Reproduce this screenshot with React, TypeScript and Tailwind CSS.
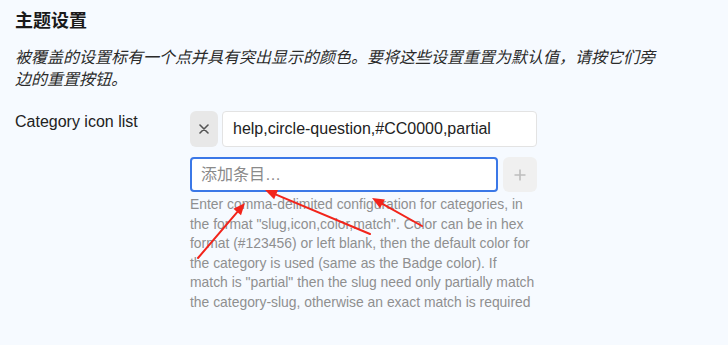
import React from 'react';

const arrows = [
    { x1: 370, y1: 234, x2: 265, y2: 190 },
    { x1: 422, y1: 226, x2: 372, y2: 198 },
    { x1: 198, y1: 258, x2: 245, y2: 203 },
];

const Arrow = ({ x1, y1, x2, y2 }: { x1: number; y1: number; x2: number; y2: number }) => {
    const a = Math.atan2(y2 - y1, x2 - x1);
    const len = 12;
    const w = 5;
    const bx = x2 - len * Math.cos(a);
    const by = y2 - len * Math.sin(a);
    const px = -Math.sin(a) * w;
    const py = Math.cos(a) * w;
    return (
        <g>
            <line x1={x1} y1={y1} x2={bx} y2={by} stroke="#f2241b" strokeWidth={2} strokeLinecap="round" />
            <polygon points={`${x2},${y2} ${bx + px},${by + py} ${bx - px},${by - py}`} fill="#f2241b" />
        </g>
    );
};

export default function App() {
    return (
        <div
            className="relative w-[728px] h-[345px] overflow-hidden bg-[#f6faff] px-[15px] text-[#222]"
            style={{ fontFamily: '"Liberation Sans", Arial, "Noto Sans CJK SC", sans-serif' }}
        >
            <h2 className="pt-[9px] text-[18px] font-bold leading-[24px] text-[#1a1a1a]">主题设置</h2>
            <p className="mt-[14px] w-[645px] text-[16px] italic leading-[22px] text-[#2a2a2a]">
                被覆盖的设置标有一个点并具有突出显示的颜色。要将这些设置重置为默认值，请按它们旁边的重置按钮。
            </p>

            <div className="mt-[20px] flex">
                <div className="w-[175px] shrink-0 pt-[2px] text-[16px] leading-[18px] text-[#222]">Category icon list</div>

                <div className="flex w-[347px] flex-col">
                    <div className="flex h-[36px] gap-[4px]">
                        <button className="flex w-[28px] shrink-0 items-center justify-center rounded-[6px] bg-[#e8e8e8] text-[#555]">
                            <svg width="10" height="10" viewBox="0 0 10 10">
                                <path d="M1 1L9 9M9 1L1 9" stroke="#555" strokeWidth="1.6" strokeLinecap="round" />
                            </svg>
                        </button>
                        <div className="flex flex-1 items-center rounded-[4px] border border-[#e3e3e3] bg-white px-[10px] text-[16px] text-[#222]">
                            help,circle-question,#CC0000,partial
                        </div>
                    </div>

                    <div className="mt-[10px] flex h-[35px] gap-[5px]">
                        <div className="flex flex-1 items-center rounded-[4px] border-2 border-[#3b78e7] bg-white px-[9px] text-[16px] text-[#8a8a8a]">
                            添加条目…
                        </div>
                        <button className="flex w-[34px] shrink-0 items-center justify-center rounded-[6px] bg-[#f0f0f0]">
                            <svg width="12" height="12" viewBox="0 0 12 12">
                                <path d="M6 0.5V11.5M0.5 6H11.5" stroke="#bdbdbd" strokeWidth="1.6" />
                            </svg>
                        </button>
                    </div>

                    <p className="mt-[3px] w-[345px] text-[13.9px] leading-[19.5px] text-[#8f8f8f]">
                        Enter comma-delimited configuration for categories, in the format "slug,icon,color,match". Color can be in hex format (#123456) or left blank, then the default color for the category is used (same as the Badge color). If match is "partial" then the slug need only partially match the category-slug, otherwise an exact match is required
                    </p>
                </div>
            </div>

            <svg className="pointer-events-none absolute left-0 top-0" width="728" height="345">
                {arrows.map((a, i) => (
                    <Arrow key={i} {...a} />
                ))}
            </svg>
        </div>
    );
}
